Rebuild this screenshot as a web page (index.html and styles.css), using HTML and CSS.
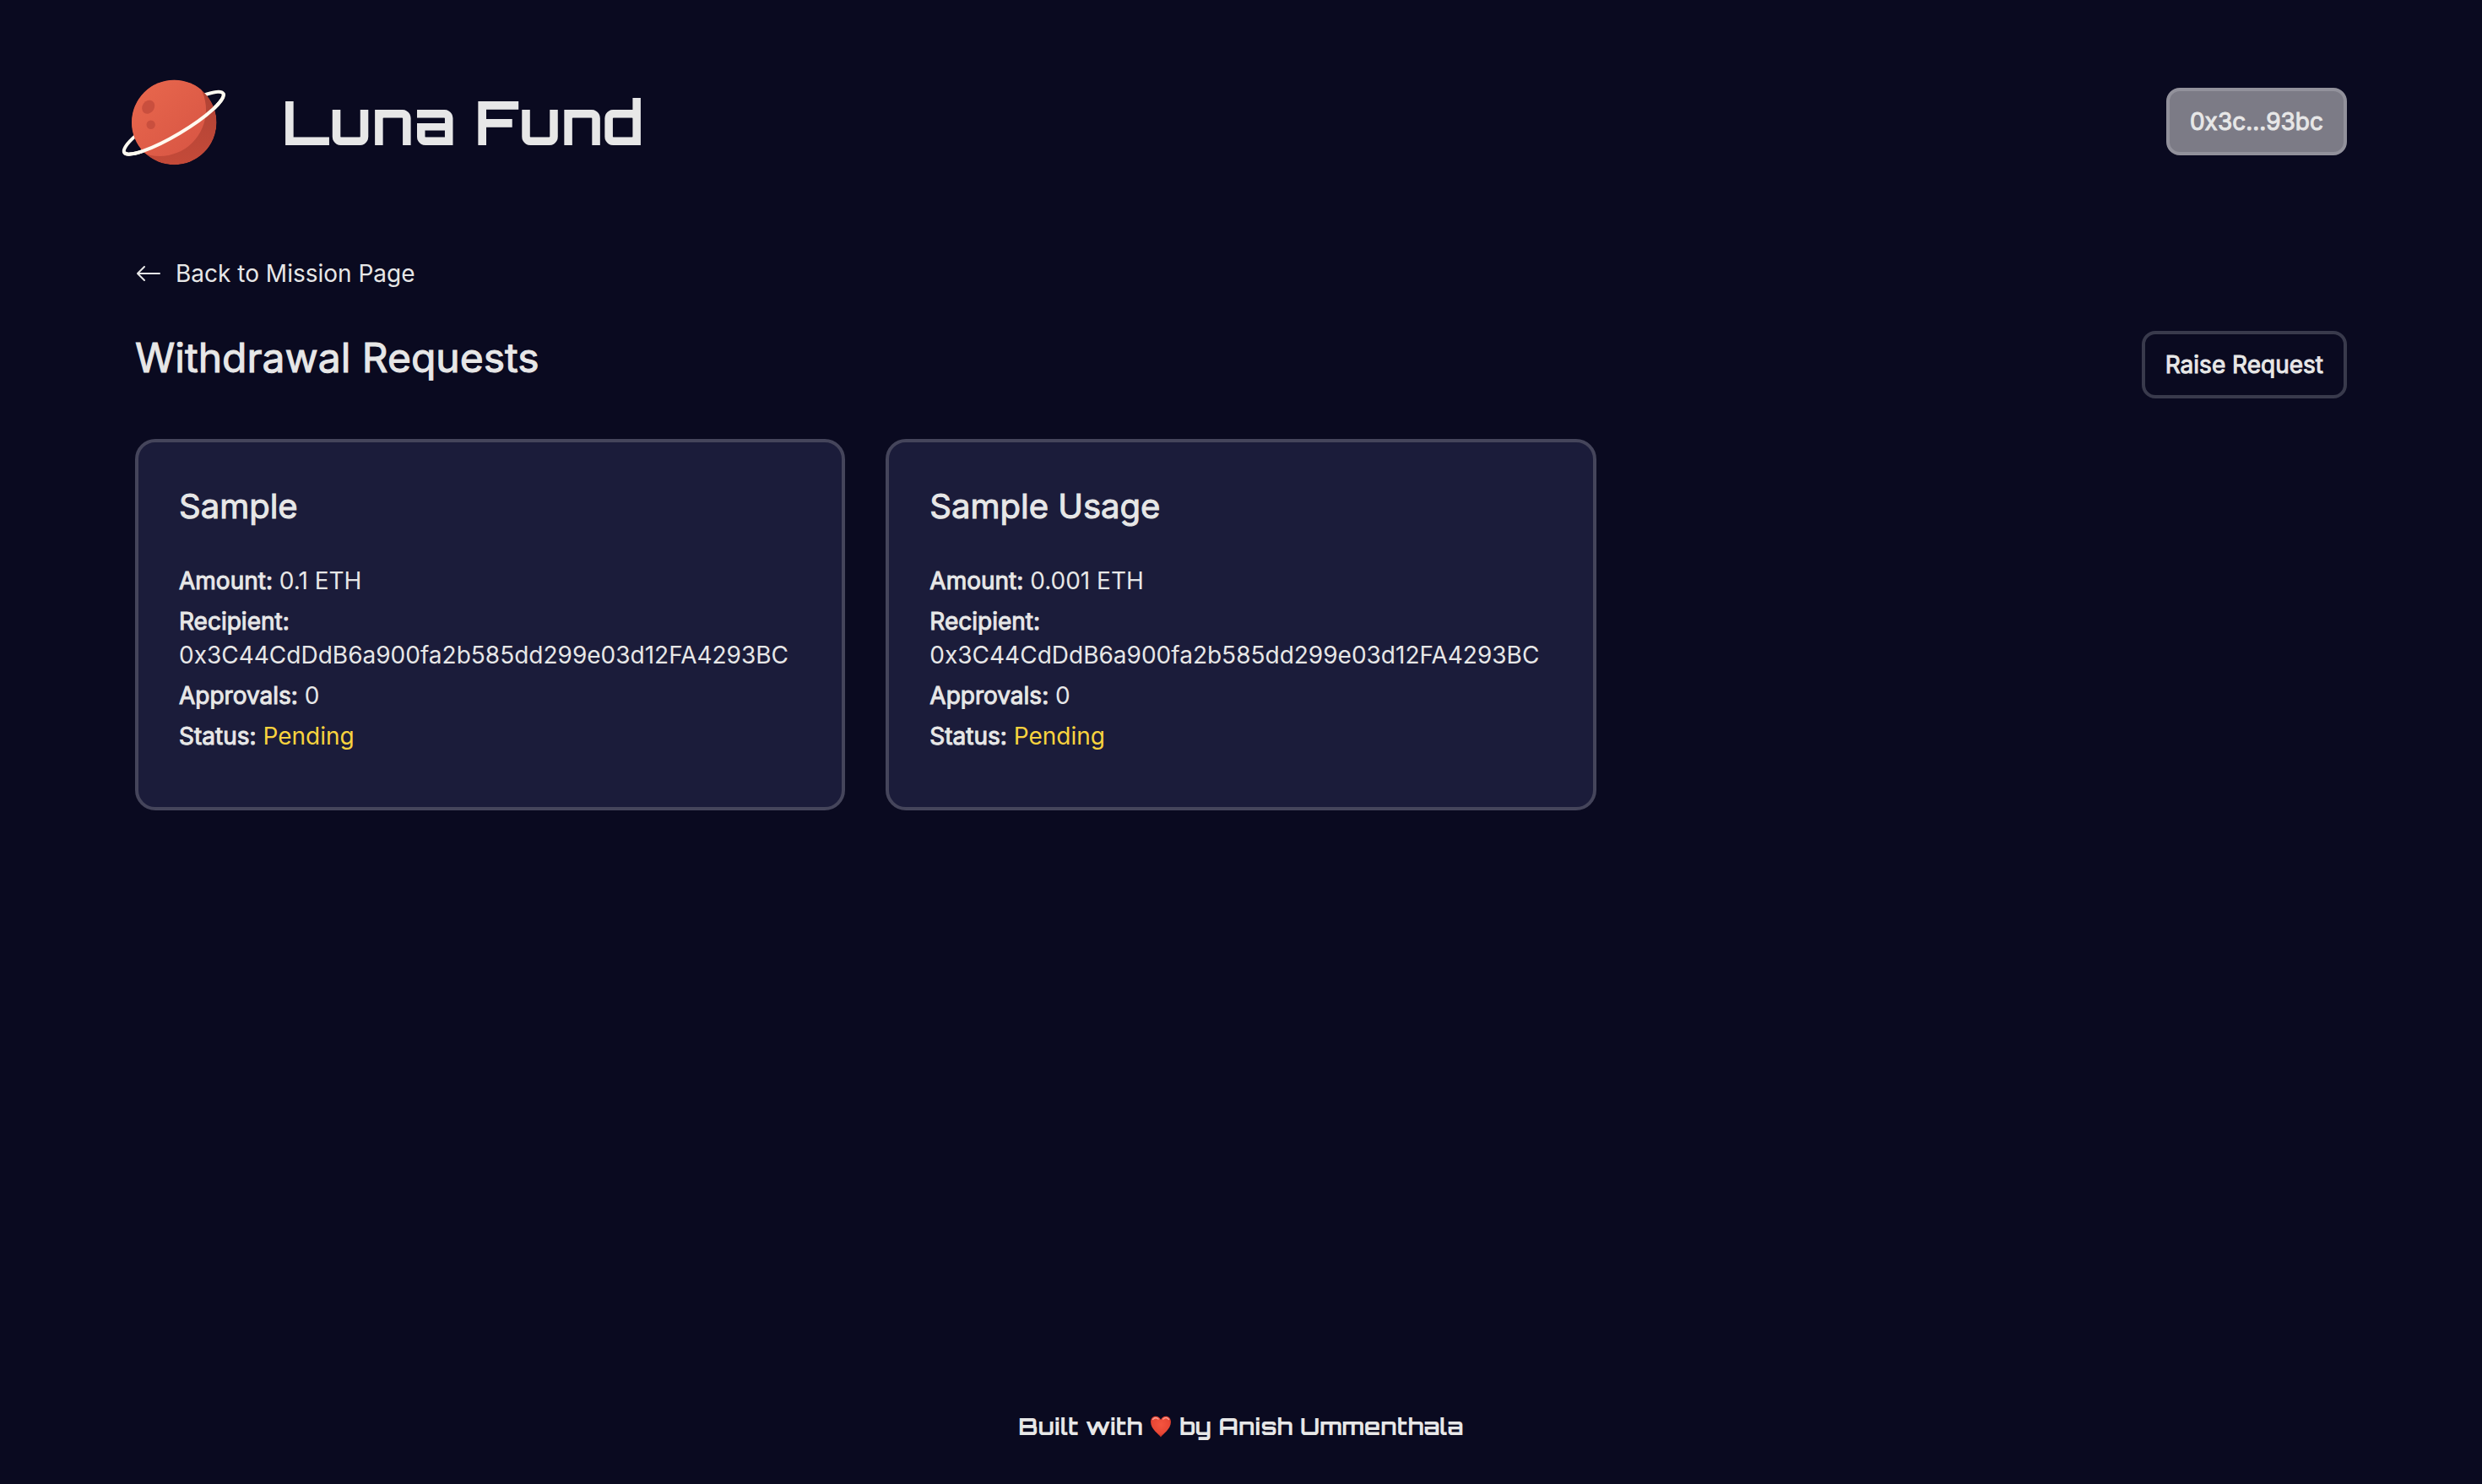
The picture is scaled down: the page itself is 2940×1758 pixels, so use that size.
FILE: index.html
```html
<!DOCTYPE html>
<html lang="en">
<head>
<meta charset="utf-8">
<meta name="viewport" content="width=device-width, initial-scale=1">
<title>Luna Fund</title>
<link rel="stylesheet" href="styles.css">
</head>
<body>
<header class="header">
  <div class="brand">
    <svg class="brand-logo" viewBox="0 -1 128 128" aria-hidden="true">
      <defs>
        <linearGradient id="surface" x1="0" y1="0" x2="1" y2="1">
          <stop offset="0" stop-color="#ed6d50"/>
          <stop offset="1" stop-color="#d75443"/>
        </linearGradient>
        <linearGradient id="shade" x1="0" y1="0" x2="0" y2="1">
          <stop offset="0" stop-color="#ad4234"/>
          <stop offset="1" stop-color="#c44a39"/>
        </linearGradient>
        <clipPath id="globe"><circle cx="64.3" cy="64" r="50.3"/></clipPath>
      </defs>
      <g fill="none" stroke="#fffaf0" stroke-width="4" transform="rotate(-30.8 63.8 64.7)">
        <ellipse cx="63.8" cy="64.7" rx="68.2" ry="14"/>
      </g>
      <g clip-path="url(#globe)">
        <circle cx="64.3" cy="64" r="50.3" fill="url(#shade)"/>
        <circle cx="47" cy="49" r="55" fill="url(#surface)"/>
        <ellipse cx="33.7" cy="45.7" rx="7" ry="8.5" fill="#c94f3e" transform="rotate(35 33.7 45.7)"/>
        <circle cx="36.7" cy="66.7" r="5.2" fill="#c94f3e"/>
      </g>
      <path d="M-4.4 64.7A68.2 14 0 0 0 132 64.7" fill="none" stroke="#fffaf0" stroke-width="4" transform="rotate(-30.8 63.8 64.7)"/>
    </svg>
    <h1 class="brand-name">Luna Fund</h1>
  </div>
  <button class="button button-account" type="button">0x3c...93bc</button>
</header>
<main class="main">
  <a class="back-link" href="#">
    <svg class="back-icon" viewBox="0 0 16 16" fill="currentColor" aria-hidden="true"><path fill-rule="evenodd" d="M15 8a.5.5 0 0 0-.5-.5H2.707l3.147-3.146a.5.5 0 1 0-.708-.708l-4 4a.5.5 0 0 0 0 .708l4 4a.5.5 0 0 0 .708-.708L2.707 8.500H14.500A.5.5 0 0 0 15 8z"/></svg>
    Back to Mission Page
  </a>
  <div class="title-row">
    <h2 class="page-title">Withdrawal Requests</h2>
    <button class="button" type="button">Raise Request</button>
  </div>
  <div class="cards">
    <article class="card">
      <h3 class="card-title">Sample</h3>
      <div class="details">
        <p><strong>Amount:</strong> 0.1 ETH</p>
        <p><strong>Recipient:</strong> 0x3C44CdDdB6a900fa2b585dd299e03d12FA4293BC</p>
        <p><strong>Approvals:</strong> 0</p>
        <p><strong>Status:</strong> <span class="pending">Pending</span></p>
      </div>
    </article>
    <article class="card">
      <h3 class="card-title">Sample Usage</h3>
      <div class="details">
        <p><strong>Amount:</strong> 0.001 ETH</p>
        <p><strong>Recipient:</strong> 0x3C44CdDdB6a900fa2b585dd299e03d12FA4293BC</p>
        <p><strong>Approvals:</strong> 0</p>
        <p><strong>Status:</strong> <span class="pending">Pending</span></p>
      </div>
    </article>
  </div>
</main>
<footer class="footer">
  <span>Built with</span>
  <svg class="heart" viewBox="0 0 26 26" role="img" aria-label="love">
    <defs><radialGradient id="heart-fill" cx=".5" cy=".4" r=".65"><stop offset="0" stop-color="#f5553f"/><stop offset=".65" stop-color="#e94735"/><stop offset="1" stop-color="#b82720"/></radialGradient></defs>
    <path fill="url(#heart-fill)" d="M13 25.500C11 22 1 16 1 7.500 1 3.500 3.500.8 7 .8c2.800 0 5 1.700 6 4.200 1-2.500 3.200-4.200 6-4.200 3.500 0 6 2.700 6 6.700 0 8.500-10 14.500-12 18z"/>
    <path d="M3.500 4.500Q6.500 1 10 4M16 4q3.500-3 6.500.5" fill="none" stroke="#ffb3a6" stroke-width="1.500" stroke-linecap="round" opacity=".8"/>
  </svg>
  <span>by Anish Ummenthala</span>
</footer>
</body>
</html>
```
FILE: styles.css
```css
* {
  box-sizing: border-box;
}

body {
  display: flex;
  flex-direction: column;
  min-height: 100vh;
  margin: 0;
  background: #0a0a20;
  color: #e7e7e7;
  font: 400 28px/40px Inter, sans-serif;
}

h1, h2, h3, p {
  margin: 0;
}

/* Emphasis thickens the regular weight, so the text keeps its width. */
strong,
.button,
.page-title,
.card-title {
  font-weight: 400;
  -webkit-text-stroke: 1px currentColor;
}

.header {
  display: flex;
  align-items: center;
  justify-content: space-between;
  padding: 80px 160px 0 142px;
}

.brand {
  display: flex;
  align-items: center;
  gap: 64px;
}

.brand-logo {
  width: 128px;
  height: 128px;
  overflow: visible;
}

.brand-name {
  font: 700 72px/96px Orbitron, "DejaVu Sans", sans-serif;
}

.button {
  height: 80px;
  padding: 0 24px;
  border: 4px solid #393a4c;
  border-radius: 16px;
  background: transparent;
  color: inherit;
  font-family: inherit;
  font-size: 28px;
  line-height: 40px;
  cursor: pointer;
}

.button-account {
  border-color: #92919b;
  background: #7c7b86;
}

.main {
  flex: 1;
  padding: 96px 160px 0;
}

.back-link {
  display: flex;
  align-items: center;
  width: fit-content;
  gap: 16px;
  color: inherit;
  text-decoration: none;
}

.back-icon {
  width: 32px;
  height: 32px;
}

.title-row {
  display: flex;
  align-items: flex-start;
  justify-content: space-between;
  margin: 48px 0;
}

.page-title {
  font-size: 48px;
  line-height: 64px;
}

.cards {
  display: grid;
  grid-template-columns: repeat(3, 1fr);
  gap: 48px;
}

.card {
  padding: 48px 48px 64px;
  border: 4px solid #45455b;
  border-radius: 24px;
  background: #1b1c3a;
}

.card-title {
  margin-bottom: 40px;
  font-size: 40px;
  line-height: 56px;
}

.details {
  display: grid;
  gap: 8px;
}

.pending {
  color: #f9d33e;
}

.footer {
  display: flex;
  align-items: center;
  justify-content: center;
  gap: 9px;
  padding: 48px;
  font: 700 28px/40px Orbitron, "DejaVu Sans", sans-serif;
}

.heart {
  width: 26px;
  height: 26px;
}
```
